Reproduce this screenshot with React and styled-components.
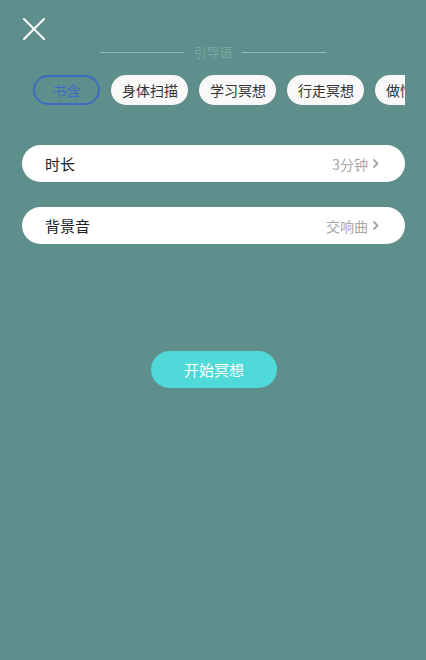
import React from "react";
import styled, { createGlobalStyle } from "styled-components";

const Global = createGlobalStyle`
  html, body { margin: 0; padding: 0; background: #5f8f8c; }
  body { font-family: "Noto Sans CJK SC", "Noto Sans", sans-serif; }
  * { box-sizing: border-box; }
`;

const Page = styled.div`
  width: 426px;
  height: 660px;
  background: #5f8f8c;
  padding: 18px 21px 0 22px;
  display: flex;
  flex-direction: column;
`;

const CloseBtn = styled.button`
  width: 22px;
  height: 22px;
  margin-left: 1px;
  padding: 0;
  border: none;
  background: none;
  display: block;
`;

const Divider = styled.div`
  display: flex;
  align-items: center;
  justify-content: center;
  gap: 9px;
  margin-top: 2px;
  height: 20px;
  margin-left: -1px;
`;

const Line = styled.div`
  width: 84px;
  height: 1px;
  background: rgba(170, 200, 198, 0.7);
`;

const DividerText = styled.span`
  font-size: 13px;
  color: #7aa6a3;
  line-height: 20px;
`;

const TabScroll = styled.div`
  margin-top: 13px;
  margin-left: 11px;
  display: flex;
  gap: 11px;
  overflow: hidden;
`;

const Tab = styled.div`
  flex: 0 0 auto;
  width: ${(p) => (p.$w ? p.$w : 77)}px;
  height: 30px;
  border-radius: 15px;
  display: flex;
  align-items: center;
  justify-content: ${(p) => (p.$active ? "center" : "flex-start")};
  padding-left: ${(p) => (p.$active ? 0 : 11)}px;
  font-size: 14px;
  white-space: nowrap;
  overflow: hidden;
  background: ${(p) => (p.$active ? "transparent" : "#f7f8f7")};
  border: ${(p) => (p.$active ? "2px solid #3d6cc2" : "none")};
  color: ${(p) => (p.$active ? "#3d6cc2" : "#333")};
`;

const Row = styled.div`
  margin-top: ${(p) => p.$mt}px;
  height: 37px;
  border-radius: 19px;
  background: #fff;
  display: flex;
  align-items: center;
  justify-content: space-between;
  padding: 0 26px 0 23px;
`;

const Label = styled.span`
  font-size: 15px;
  color: #222;
`;

const Value = styled.span`
  display: flex;
  align-items: center;
  gap: 4px;
  font-size: 14px;
  color: #a8a8a8;
`;

const StartBtn = styled.button`
  align-self: center;
  margin-top: 107px;
  margin-left: 1px;
  width: 126px;
  height: 37px;
  border-radius: 19px;
  border: none;
  background: #4fd9d9;
  color: #fff;
  font-family: inherit;
  font-size: 15px;
`;

const Chevron = () => (
  <svg width="7" height="11" viewBox="0 0 7 11">
    <path d="M1.5 1.5 L5.5 5.5 L1.5 9.5" fill="none" stroke="#a3a3a3" strokeWidth="1.8" />
  </svg>
);

export default function App() {
  return (
    <>
      <Global />
      <Page>
        <CloseBtn aria-label="close">
          <svg width="22" height="22" viewBox="0 0 22 22">
            <path d="M1 1 L21 21 M21 1 L1 21" stroke="#fff" strokeWidth="2" strokeLinecap="round" />
          </svg>
        </CloseBtn>
        <Divider>
          <Line />
          <DividerText>引导语</DividerText>
          <Line />
        </Divider>
        <TabScroll>
          <Tab $active $w={67}>书含</Tab>
          <Tab>身体扫描</Tab>
          <Tab>学习冥想</Tab>
          <Tab>行走冥想</Tab>
          <Tab>做情绪练习</Tab>
        </TabScroll>
        <Row $mt={40}>
          <Label>时长</Label>
          <Value>3分钟<Chevron /></Value>
        </Row>
        <Row $mt={25}>
          <Label>背景音</Label>
          <Value>交响曲<Chevron /></Value>
        </Row>
        <StartBtn>开始冥想</StartBtn>
      </Page>
    </>
  );
}
